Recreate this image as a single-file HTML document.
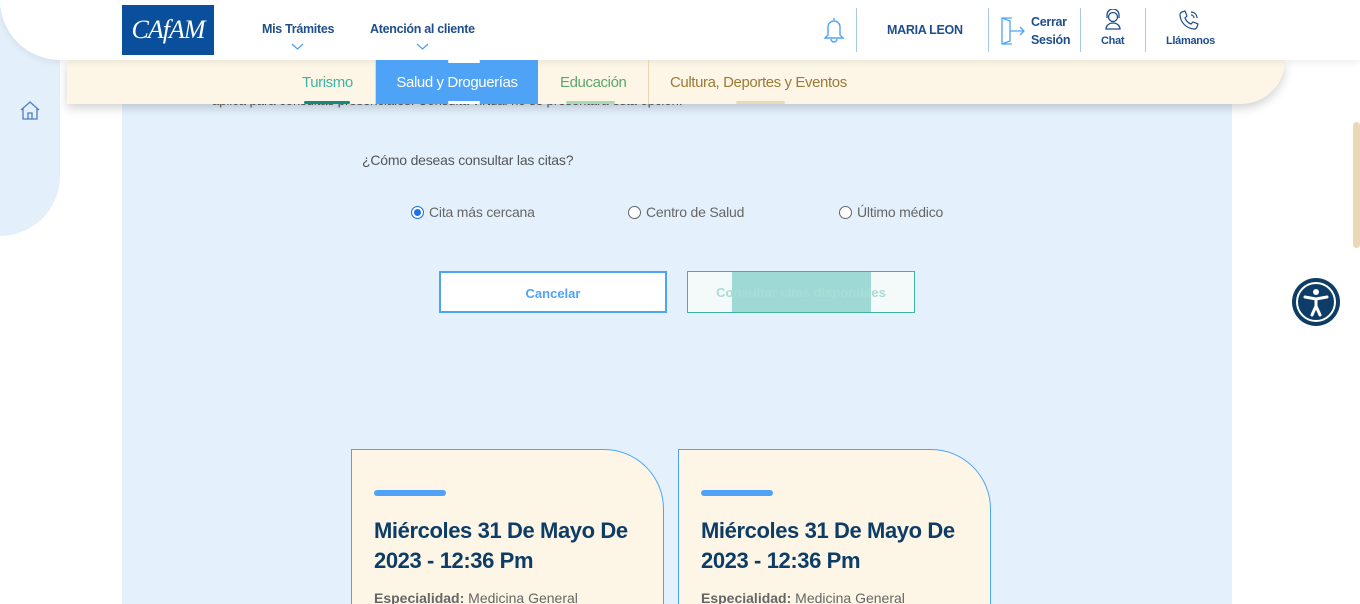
<!DOCTYPE html>
<html><head><meta charset="utf-8"><style>
*{margin:0;padding:0;box-sizing:border-box}
html,body{width:1360px;height:604px;overflow:hidden}
body{background:#fff;font-family:"Liberation Sans",sans-serif;position:relative}
.abs{position:absolute}
.side{left:0;top:0;width:60px;height:236px;background:#e3f0fc;border-bottom-right-radius:60px}
.main{left:122px;top:60px;width:1110px;height:544px;background:#e4f1fd}
.hdr{left:0;top:0;width:1360px;height:60px;background:#fff;border-bottom-left-radius:60px;box-shadow:0 2px 8px rgba(0,0,0,.08);z-index:3}
.sub{left:67px;top:60px;width:1218px;height:44px;background:#fdf6e6;border-bottom-right-radius:48px;box-shadow:0 4px 10px rgba(0,0,0,.18);z-index:2}
.nav{font-size:12.5px;color:#1e4e8c;font-weight:bold;letter-spacing:-.3px}
.sep{top:8px;width:1px;height:44px;background:#a9c8e8}
.tab{top:61px;height:44px;line-height:44px;font-size:15px;z-index:4;letter-spacing:-.4px}
.ind{height:3px;z-index:5;border-radius:2px}
.q{left:362px;top:152px;font-size:14px;color:#555;letter-spacing:-.2px}
.r{top:204px;font-size:14px;color:#666;display:flex;align-items:center;gap:5px;letter-spacing:-.2px}
.r i{display:inline-block;width:13px;height:13px;border-radius:50%;border:1px solid #666;background:#fff}
.r i.on{border:1px solid #1a73e8;box-shadow:inset 0 0 0 2px #fff;background:#1a73e8}
.btn{top:271px;width:228px;height:42px;font-size:13px;font-weight:bold;text-align:center;line-height:42px}
.card{top:449px;width:313px;height:170px;background:#fdf6e6;border:1px solid #4fa3f7;border-top-right-radius:60px}
.card .bar{position:absolute;left:22px;top:40px;width:72px;height:6px;background:#4fa3f7;border-radius:3px}
.card h2{position:absolute;left:22px;top:66px;font-size:22px;line-height:30px;color:#0d3d66;font-weight:bold;letter-spacing:-.4px;width:285px}
.card p{position:absolute;left:22px;top:140px;font-size:14px;color:#666}
.card p b{color:#666}
</style></head><body>
<div class="abs side"></div>
<div class="abs main"></div>
<svg class="abs" style="left:19px;top:99px" width="22" height="22" viewBox="0 0 22 22" fill="none" stroke="#4a7fc0" stroke-width="1.3"><path d="M2 11 L11 3 L20 11 M4 9.5 V20 H18 V9.5 M9 20 V14 H13 V20"/></svg>
<div class="abs" style="left:212px;top:93px;font-size:13px;color:#555">aplica para consultas presenciales. Consulta virtual no se presentará esta opción.</div>

<div class="abs hdr">
 <div class="abs" style="left:122px;top:5px;width:92px;height:50px;background:#0a4f9c;color:#fff;font-family:'Liberation Serif',serif;font-style:italic;font-size:26px;line-height:50px;text-align:center;letter-spacing:-1px">CAfAM</div>
 <div class="abs nav" style="left:262px;top:22px">Mis Trámites</div>
 <svg class="abs" style="left:291px;top:43px" width="13" height="8"><path d="M1 1 L6.5 6 L12 1" stroke="#4fa3f7" fill="none" stroke-width="1.3"/></svg>
 <div class="abs nav" style="left:370px;top:22px">Atención al cliente</div>
 <svg class="abs" style="left:416px;top:43px" width="13" height="8"><path d="M1 1 L6.5 6 L12 1" stroke="#4fa3f7" fill="none" stroke-width="1.3"/></svg>
 <svg class="abs" style="left:823px;top:16px" width="22" height="27" viewBox="0 0 22 27" fill="none" stroke="#4fa3f7" stroke-width="1.4"><path d="M11 2 V4 M5 19 V11 A6 6 0 0 1 17 11 V19 L20 22 H2 L5 19 Z M8 23 A3 3 0 0 0 14 23"/></svg>
 <div class="abs sep" style="left:856px"></div>
 <div class="abs nav" style="left:887px;top:23px">MARIA LEON</div>
 <div class="abs sep" style="left:988px"></div>
 <svg class="abs" style="left:999px;top:16px" width="28" height="30" viewBox="0 0 28 30" fill="none" stroke="#4fa3f7" stroke-width="1.3"><path d="M13 2 H3 V28 H13 M3 2 L11 5 V25 L3 28 M11 15 H25 M21 11 L25 15 L21 19"/></svg>
 <div class="abs nav" style="left:1031px;top:13px;line-height:18px">Cerrar<br>Sesión</div>
 <div class="abs sep" style="left:1080px"></div>
 <svg class="abs" style="left:1103px;top:9px" width="20" height="22" viewBox="0 0 20 22" fill="none" stroke="#1e4e8c" stroke-width="1.3"><circle cx="10" cy="8" r="4.5"/><path d="M4 9 V6 A6 6 0 0 1 16 6 V9 M3 20 A7 6 0 0 1 17 20 Z"/></svg>
 <div class="abs nav" style="left:1101px;top:35px;font-size:11px">Chat</div>
 <div class="abs sep" style="left:1145px"></div>
 <svg class="abs" style="left:1178px;top:9px" width="22" height="22" viewBox="0 0 22 22" fill="none" stroke="#1e4e8c" stroke-width="1.2"><path d="M4 3 L7 2 L9 7 L7 9 A10 10 0 0 0 13 15 L15 13 L20 15 L19 18 A3 3 0 0 1 16 20 A15 15 0 0 1 2 6 A3 3 0 0 1 4 3 Z M13 6 A3 3 0 0 1 16 9 M13 3 A6 6 0 0 1 19 9"/></svg>
 <div class="abs nav" style="left:1166px;top:35px;font-size:11px">Llámanos</div>
</div>

<div class="abs sub"></div>
<div class="abs tab" style="left:302px;color:#3fb3a0">Turismo</div>
<div class="abs" style="left:375px;top:60px;width:1px;height:44px;background:#e6d7b3;z-index:4"></div>
<div class="abs tab" style="left:376px;top:60px;padding-top:1px;width:162px;background:#4fa3f7;color:#fff;text-align:center">Salud y Droguerías</div>
<div class="abs tab" style="left:560px;color:#5aa86a">Educación</div>
<div class="abs" style="left:648px;top:60px;width:1px;height:44px;background:#e6d7b3;z-index:4"></div>
<div class="abs tab" style="left:670px;color:#9a7a36">Cultura, Deportes y Eventos</div>
<div class="abs ind" style="left:448px;top:60px;width:32px;background:#fff"></div>
<div class="abs ind" style="left:304px;top:101px;width:46px;background:#0e8c7c"></div>
<div class="abs ind" style="left:448px;top:101px;width:32px;background:#fff"></div>
<div class="abs ind" style="left:566px;top:101px;width:49px;background:#a6dcb0"></div>
<div class="abs ind" style="left:736px;top:101px;width:49px;background:#ead9b8"></div>

<div class="abs q">¿Cómo deseas consultar las citas?</div>
<div class="abs r" style="left:411px"><i class="on"></i>Cita más cercana</div>
<div class="abs r" style="left:628px"><i></i>Centro de Salud</div>
<div class="abs r" style="left:839px"><i></i>Último médico</div>

<div class="abs btn" style="left:439px;border:2px solid #4fa3f7;background:#fff;color:#4fa3f7">Cancelar</div>
<div class="abs btn" style="left:687px;border:1px solid #3fb3a0;background:#f4fafa;color:#a6ddd6">
 <div class="abs" style="left:44px;top:0;width:139px;height:40px;background:#9fd9d5"></div>
 <span style="position:relative">Consultar citas disponibles</span>
</div>

<div class="abs card" style="left:351px"><div class="bar"></div><h2>Miércoles 31 De Mayo De 2023 - 12:36 Pm</h2><p><b>Especialidad:</b> Medicina General</p></div>
<div class="abs card" style="left:678px"><div class="bar"></div><h2>Miércoles 31 De Mayo De 2023 - 12:36 Pm</h2><p><b>Especialidad:</b> Medicina General</p></div>

<div class="abs" style="left:1353px;top:122px;width:7px;height:126px;background:#ead9b8;border-radius:4px"></div>
<svg class="abs" style="left:1292px;top:278px" width="48" height="48" viewBox="0 0 48 48"><circle cx="24" cy="24" r="24" fill="#0d3d66"/><circle cx="24" cy="24" r="19" fill="none" stroke="#fff" stroke-width="2"/><circle cx="24" cy="14" r="3" fill="#fff"/><path d="M13 19 L24 21 L35 19 M24 21 V28 M24 28 L20 37 M24 28 L28 37" stroke="#fff" stroke-width="3" fill="none" stroke-linecap="round"/></svg>
</body></html>
